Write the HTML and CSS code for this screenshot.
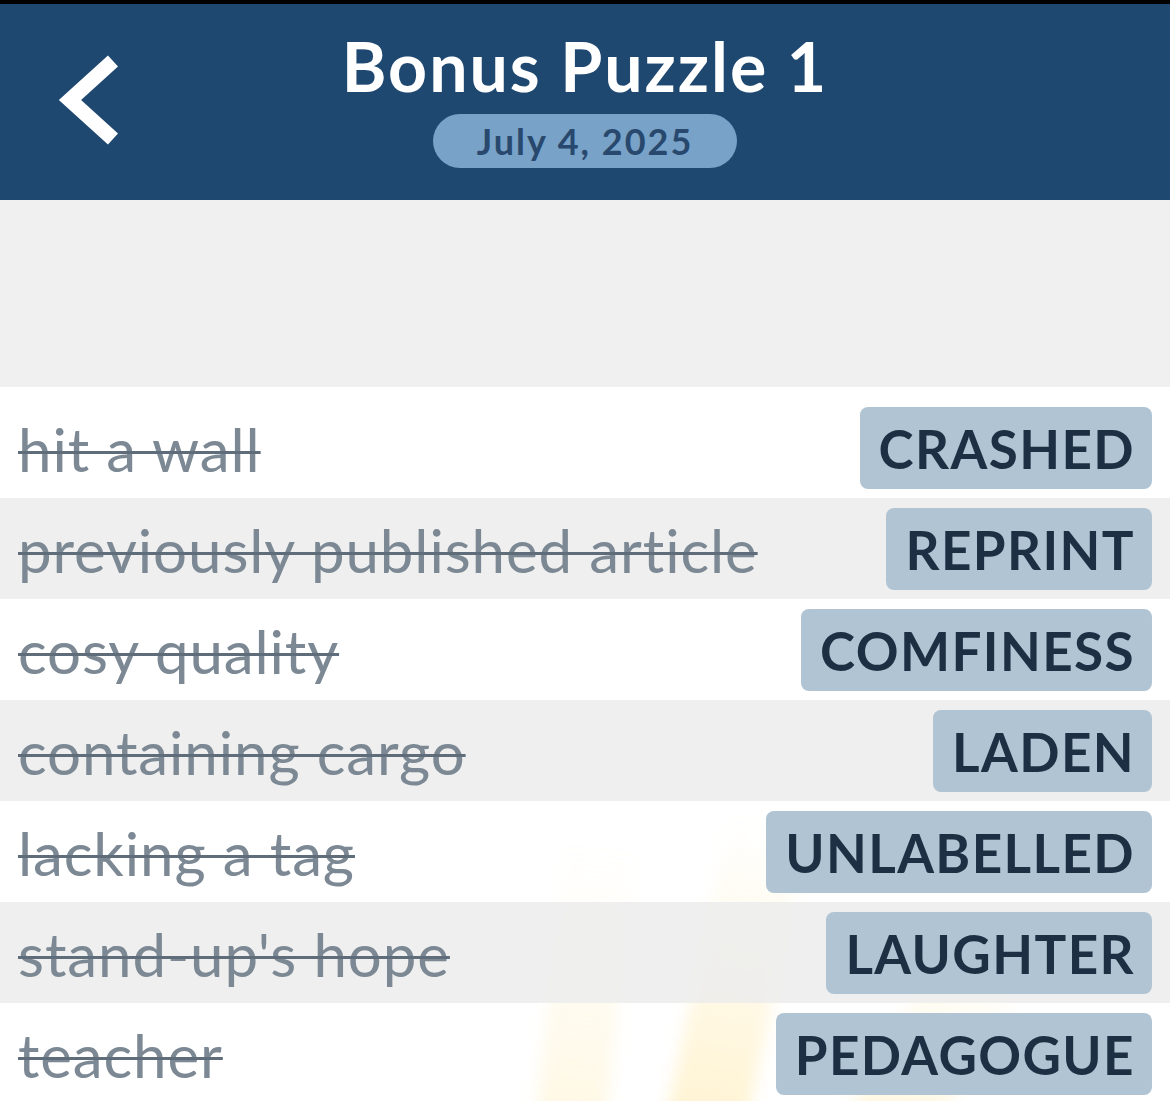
FILE: index.html
```html
<!DOCTYPE html>
<html>
<head>
<meta charset="utf-8">
<link rel="stylesheet" href="styles.css">
</head>
<body>
<div class="app">
  <div class="statusbar"></div>
  <header class="header">
    <div class="back">
      <svg width="70" height="100" viewBox="0 0 70 100">
        <polyline points="65,15 22,54 65,93" fill="none" stroke="#ffffff" stroke-width="15" stroke-linejoin="miter" stroke-linecap="butt"/>
      </svg>
    </div>
    <div class="titles">
      <h1 class="title">Bonus Puzzle 1</h1>
      <div class="date">July 4, 2025</div>
    </div>
  </header>
  <div class="spacer"></div>
  <div class="list">
    <div class="decor">
      <div class="ray ray1"></div>
      <div class="ray ray2"></div>
      <div class="ray ray3"></div>
    </div>
    <div class="row first"><span class="clue">hit a wall</span><span class="answer">CRASHED</span></div>
    <div class="row alt"><span class="clue">previously published article</span><span class="answer">REPRINT</span></div>
    <div class="row"><span class="clue">cosy quality</span><span class="answer">COMFINESS</span></div>
    <div class="row alt"><span class="clue">containing cargo</span><span class="answer">LADEN</span></div>
    <div class="row"><span class="clue">lacking a tag</span><span class="answer">UNLABELLED</span></div>
    <div class="row alt"><span class="clue">stand-up's hope</span><span class="answer">LAUGHTER</span></div>
    <div class="row"><span class="clue">teacher</span><span class="answer">PEDAGOGUE</span></div>
  </div>
</div>
</body>
</html>
```
FILE: styles.css
```css
html, body {
  margin: 0;
  padding: 0;
  background: #ffffff;
}
body {
  font-family: "Lato", "Noto Sans", sans-serif;
  overflow: hidden;
}
.app {
  width: 1170px;
  height: 1101px;
  overflow: hidden;
  display: flex;
  flex-direction: column;
}
.statusbar {
  height: 4px;
  background: #000000;
  flex: none;
}
.header {
  height: 196px;
  flex: none;
  background: #1f4870;
  position: relative;
  display: flex;
  justify-content: center;
}
.back {
  position: absolute;
  left: 48px;
  top: 42px;
  width: 70px;
  height: 100px;
}
.titles {
  display: flex;
  flex-direction: column;
  align-items: center;
}
.title {
  margin: 22px 0 0 0;
  font-size: 68px;
  line-height: 80px;
  font-weight: 700;
  color: #ffffff;
  letter-spacing: 2px;
}
.date {
  margin-top: 8px;
  width: 304px;
  height: 54px;
  border-radius: 27px;
  background: #78a2c8;
  color: #28496d;
  font-size: 36px;
  font-weight: 700;
  display: flex;
  align-items: center;
  justify-content: center;
  letter-spacing: 2px;
}
.spacer {
  height: 187px;
  flex: none;
  background: #f0f0f0;
}
.list {
  position: relative;
  flex: 1;
}
.decor {
  position: absolute;
  inset: 0;
  pointer-events: none;
  overflow: hidden;
}
.ray {
  position: absolute;
  transform-origin: bottom center;
  filter: blur(8px);
}
.ray1 {
  left: 535px;
  top: 460px;
  width: 70px;
  height: 280px;
  transform: rotate(6deg);
  background: linear-gradient(to top, rgba(255, 222, 130, 0.22), rgba(255, 222, 130, 0));
}
.ray2 {
  left: 665px;
  top: 430px;
  width: 80px;
  height: 310px;
  transform: rotate(12deg);
  background: linear-gradient(to top, rgba(255, 220, 120, 0.34), rgba(255, 220, 120, 0));
}
.ray3 {
  left: 835px;
  top: 520px;
  width: 85px;
  height: 240px;
  transform: rotate(30deg);
  background: linear-gradient(to top, rgba(255, 220, 120, 0.24), rgba(255, 220, 120, 0));
}
.row {
  position: relative;
  height: 101px;
  box-sizing: border-box;
  padding: 10px 18px 9px 18px;
  display: flex;
  align-items: center;
  justify-content: space-between;
}
.row.first {
  height: 111px;
  padding-top: 20px;
}
.row.alt {
  background: rgba(236, 236, 236, 0.85);
}
.clue {
  font-size: 60px;
  color: #7c8994;
  letter-spacing: 0.9px;
  text-decoration: line-through;
  text-decoration-color: #5f6d7a;
  text-decoration-thickness: 3px;
  white-space: nowrap;
  position: relative;
  top: 1px;
}
.answer {
  height: 82px;
  box-sizing: border-box;
  padding: 0 17px 0 19px;
  border-radius: 8px;
  background: #b1c4d3;
  color: #1d2f42;
  font-size: 53px;
  font-weight: 700;
  display: flex;
  align-items: center;
  letter-spacing: 1.4px;
  white-space: nowrap;
}
```
